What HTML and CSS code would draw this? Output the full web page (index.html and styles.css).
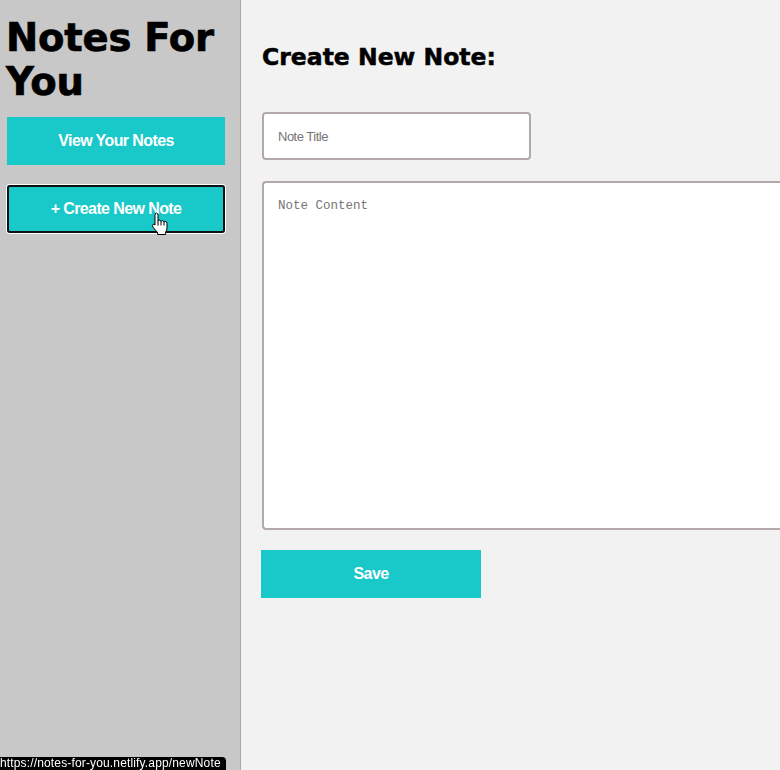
FILE: index.html
```html
<!DOCTYPE html>
<html lang="en">
<head>
<meta charset="utf-8">
<title>Notes For You</title>
<link rel="stylesheet" href="styles.css">
</head>
<body>
<div class="app">
  <aside class="sidebar">
    <h1 class="brand">Notes For You</h1>
    <nav class="nav">
      <a class="nav-btn" href="#">View Your Notes</a>
      <a class="nav-btn nav-btn-focus" href="#">+ Create New Note
        <svg class="cursor" width="18" height="24" viewBox="0 0 18 24" aria-hidden="true">
          <path d="M4 3.2Q4 1 5.5 1Q7 1 7 3.2L7 9.2Q7.4 8.2 8.6 8.2Q9.8 8.2 10 9.5Q10.4 8.7 11.5 8.7Q12.7 8.7 13 10.2Q13.4 9.5 14.3 9.5Q16 9.5 16 11.3L16 15.8Q16 18.2 14.6 20.2L14.6 22.5L6.6 22.5L6.6 20.3Q4.2 18.3 2.1 15.3Q0.7 13.2 2.2 12.3Q3.2 11.8 4 13Z" fill="#fff" stroke="#000" stroke-width="1" stroke-linejoin="round"/>
          <path d="M7 9.2V13.5M10 9.5V13.5M13 10.2V13.5" fill="none" stroke="#000" stroke-width="1"/>
        </svg>
      </a>
    </nav>
  </aside>
  <main class="main">
    <h2 class="page-title">Create New Note:</h2>
    <form class="note-form">
      <input class="note-title" type="text" placeholder="Note Title">
      <textarea class="note-content" placeholder="Note Content"></textarea>
      <button class="save-btn" type="button">Save</button>
    </form>
  </main>
</div>
<div class="status">https://notes-for-you.netlify.app/newNote</div>
</body>
</html>
```

FILE: styles.css
```css
html, body {
  margin: 0;
  padding: 0;
  height: 100%;
  overflow: hidden;
}

body {
  font-family: "Liberation Sans", Arial, sans-serif;
  background: #f2f2f2;
}

.app {
  display: flex;
  height: 770px;
}

.sidebar {
  flex: none;
  width: 241px;
  box-sizing: border-box;
  background: #c8c8c8;
  border-right: 1px solid #a9a9a9;
  padding: 0 0 0 7px;
}

.brand {
  margin: 16px 0 0 -1px;
  font-family: "DejaVu Sans", sans-serif;
  font-weight: bold;
  font-size: 38.5px;
  line-height: 44px;
  color: #000;
  letter-spacing: -0.2px;
  -webkit-text-stroke: 0.7px #000;
}

.nav {
  display: flex;
  flex-direction: column;
  gap: 20px;
  margin-top: 13px;
}

.nav-btn {
  position: relative;
  display: flex;
  align-items: center;
  justify-content: center;
  width: 218px;
  height: 48px;
  background: #19c8c8;
  color: #fff;
  font-weight: bold;
  font-size: 16px;
  letter-spacing: -0.6px;
  text-decoration: none;
}

.nav-btn-focus {
  border-radius: 3px;
  box-shadow: inset 0 0 0 2px #101010, 0 0 0 1px #fff;
}

.cursor {
  position: absolute;
  left: 144px;
  top: 27px;
}

.main {
  flex: 1;
  padding: 0 0 0 20px;
  min-width: 0;
  overflow: hidden;
}

.page-title {
  margin: 43px 0 0 1px;
  font-family: "DejaVu Sans", sans-serif;
  font-weight: bold;
  font-size: 23.5px;
  line-height: 28px;
  color: #000;
  -webkit-text-stroke: 0.5px #000;
}

.note-form {
  display: flex;
  flex-direction: column;
  align-items: flex-start;
  margin-top: 41px;
}

.note-title {
  box-sizing: border-box;
  width: 269px;
  height: 48px;
  margin-left: 1px;
  padding: 0 14px;
  border: 2px solid #b3a9a9;
  border-radius: 4px;
  background: #fff;
  font-family: "Liberation Sans", Arial, sans-serif;
  font-size: 13px;
  letter-spacing: -0.5px;
  outline: none;
}

.note-title::placeholder {
  color: #757575;
}

.note-content {
  box-sizing: border-box;
  width: 540px;
  height: 349px;
  margin: 21px 0 0 1px;
  padding: 16px 14px;
  border: 2px solid #b3a9a9;
  border-right: none;
  border-radius: 4px 0 0 4px;
  background: #fff;
  font-family: "Liberation Mono", "Courier New", monospace;
  font-size: 12.5px;
  resize: none;
  outline: none;
}

.note-content::placeholder {
  color: #757575;
}

.save-btn {
  width: 220px;
  height: 48px;
  margin-top: 20px;
  border: none;
  background: #19c8c8;
  color: #fff;
  font-family: "Liberation Sans", Arial, sans-serif;
  font-weight: bold;
  font-size: 16px;
  letter-spacing: -0.6px;
}

.status {
  position: fixed;
  left: 0;
  top: 757px;
  height: 13px;
  padding: 1px 5px 0 0;
  box-sizing: border-box;
  background: #000;
  color: #fff;
  border-top-right-radius: 4px;
  font-family: "Liberation Sans", Arial, sans-serif;
  font-size: 12px;
  line-height: 11px;
  letter-spacing: 0.15px;
  white-space: nowrap;
}
```
